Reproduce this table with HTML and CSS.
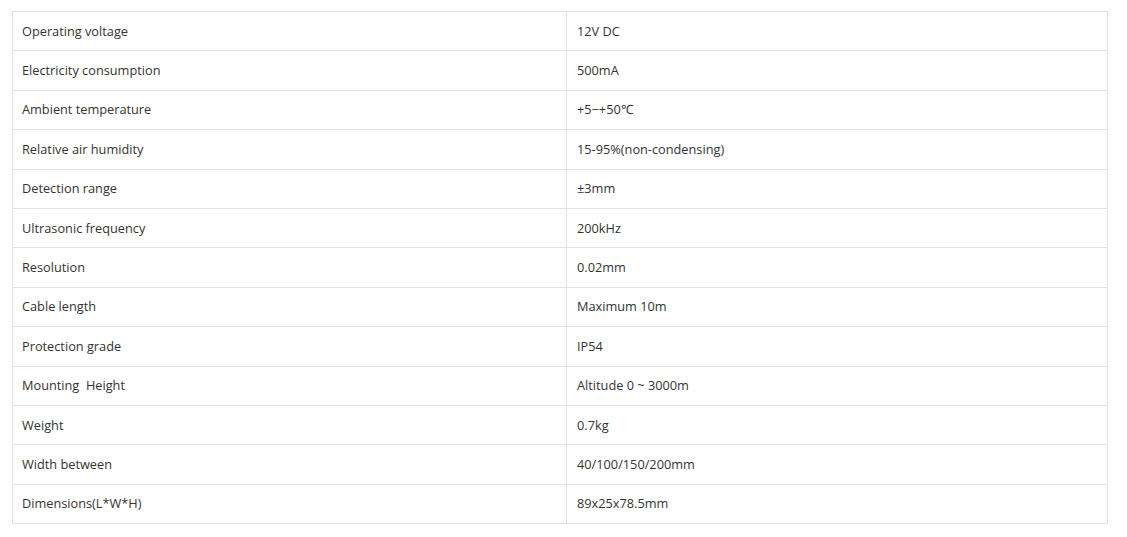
FILE: index.html
```html
<!DOCTYPE html>
<html>
<head>
<meta charset="utf-8">
<link rel="stylesheet" href="styles.css">
</head>
<body>
<div class="wrap">
<table class="spec">
<tbody>
<tr><td class="k">Operating voltage</td><td class="v">12V DC</td></tr>
<tr><td class="k">Electricity consumption</td><td class="v">500mA</td></tr>
<tr><td class="k">Ambient temperature</td><td class="v">+5−+50℃</td></tr>
<tr><td class="k">Relative air humidity</td><td class="v">15-95%(non-condensing)</td></tr>
<tr><td class="k">Detection range</td><td class="v">±3mm</td></tr>
<tr><td class="k">Ultrasonic frequency</td><td class="v">200kHz</td></tr>
<tr><td class="k">Resolution</td><td class="v">0.02mm</td></tr>
<tr><td class="k">Cable length</td><td class="v">Maximum 10m</td></tr>
<tr><td class="k">Protection grade</td><td class="v">IP54</td></tr>
<tr><td class="k">Mounting&nbsp; Height</td><td class="v">Altitude 0 ~ 3000m</td></tr>
<tr><td class="k">Weight</td><td class="v">0.7kg</td></tr>
<tr><td class="k">Width between</td><td class="v">40/100/150/200mm</td></tr>
<tr><td class="k">Dimensions(L*W*H)</td><td class="v">89x25x78.5mm</td></tr>
</tbody>
</table>
</div>
</body>
</html>
```
FILE: styles.css
```css
html, body {
  margin: 0;
  padding: 0;
  background: #fff;
}
.wrap {
  padding: 11px 19px 0 12px;
}
.spec {
  width: 1096px;
  border-collapse: collapse;
  font-family: "Open Sans", sans-serif;
  font-size: 12.75px;
  color: #333;
}
.spec td {
  border: 1px solid #e1e1e8;
  padding: 7.5px 9px 8.5px 9px;
  line-height: 22.4px;
  text-align: left;
  vertical-align: middle;
}
.spec td.k {
  width: 535px;
}
.spec td.v {
  padding-left: 10px;
}
```
